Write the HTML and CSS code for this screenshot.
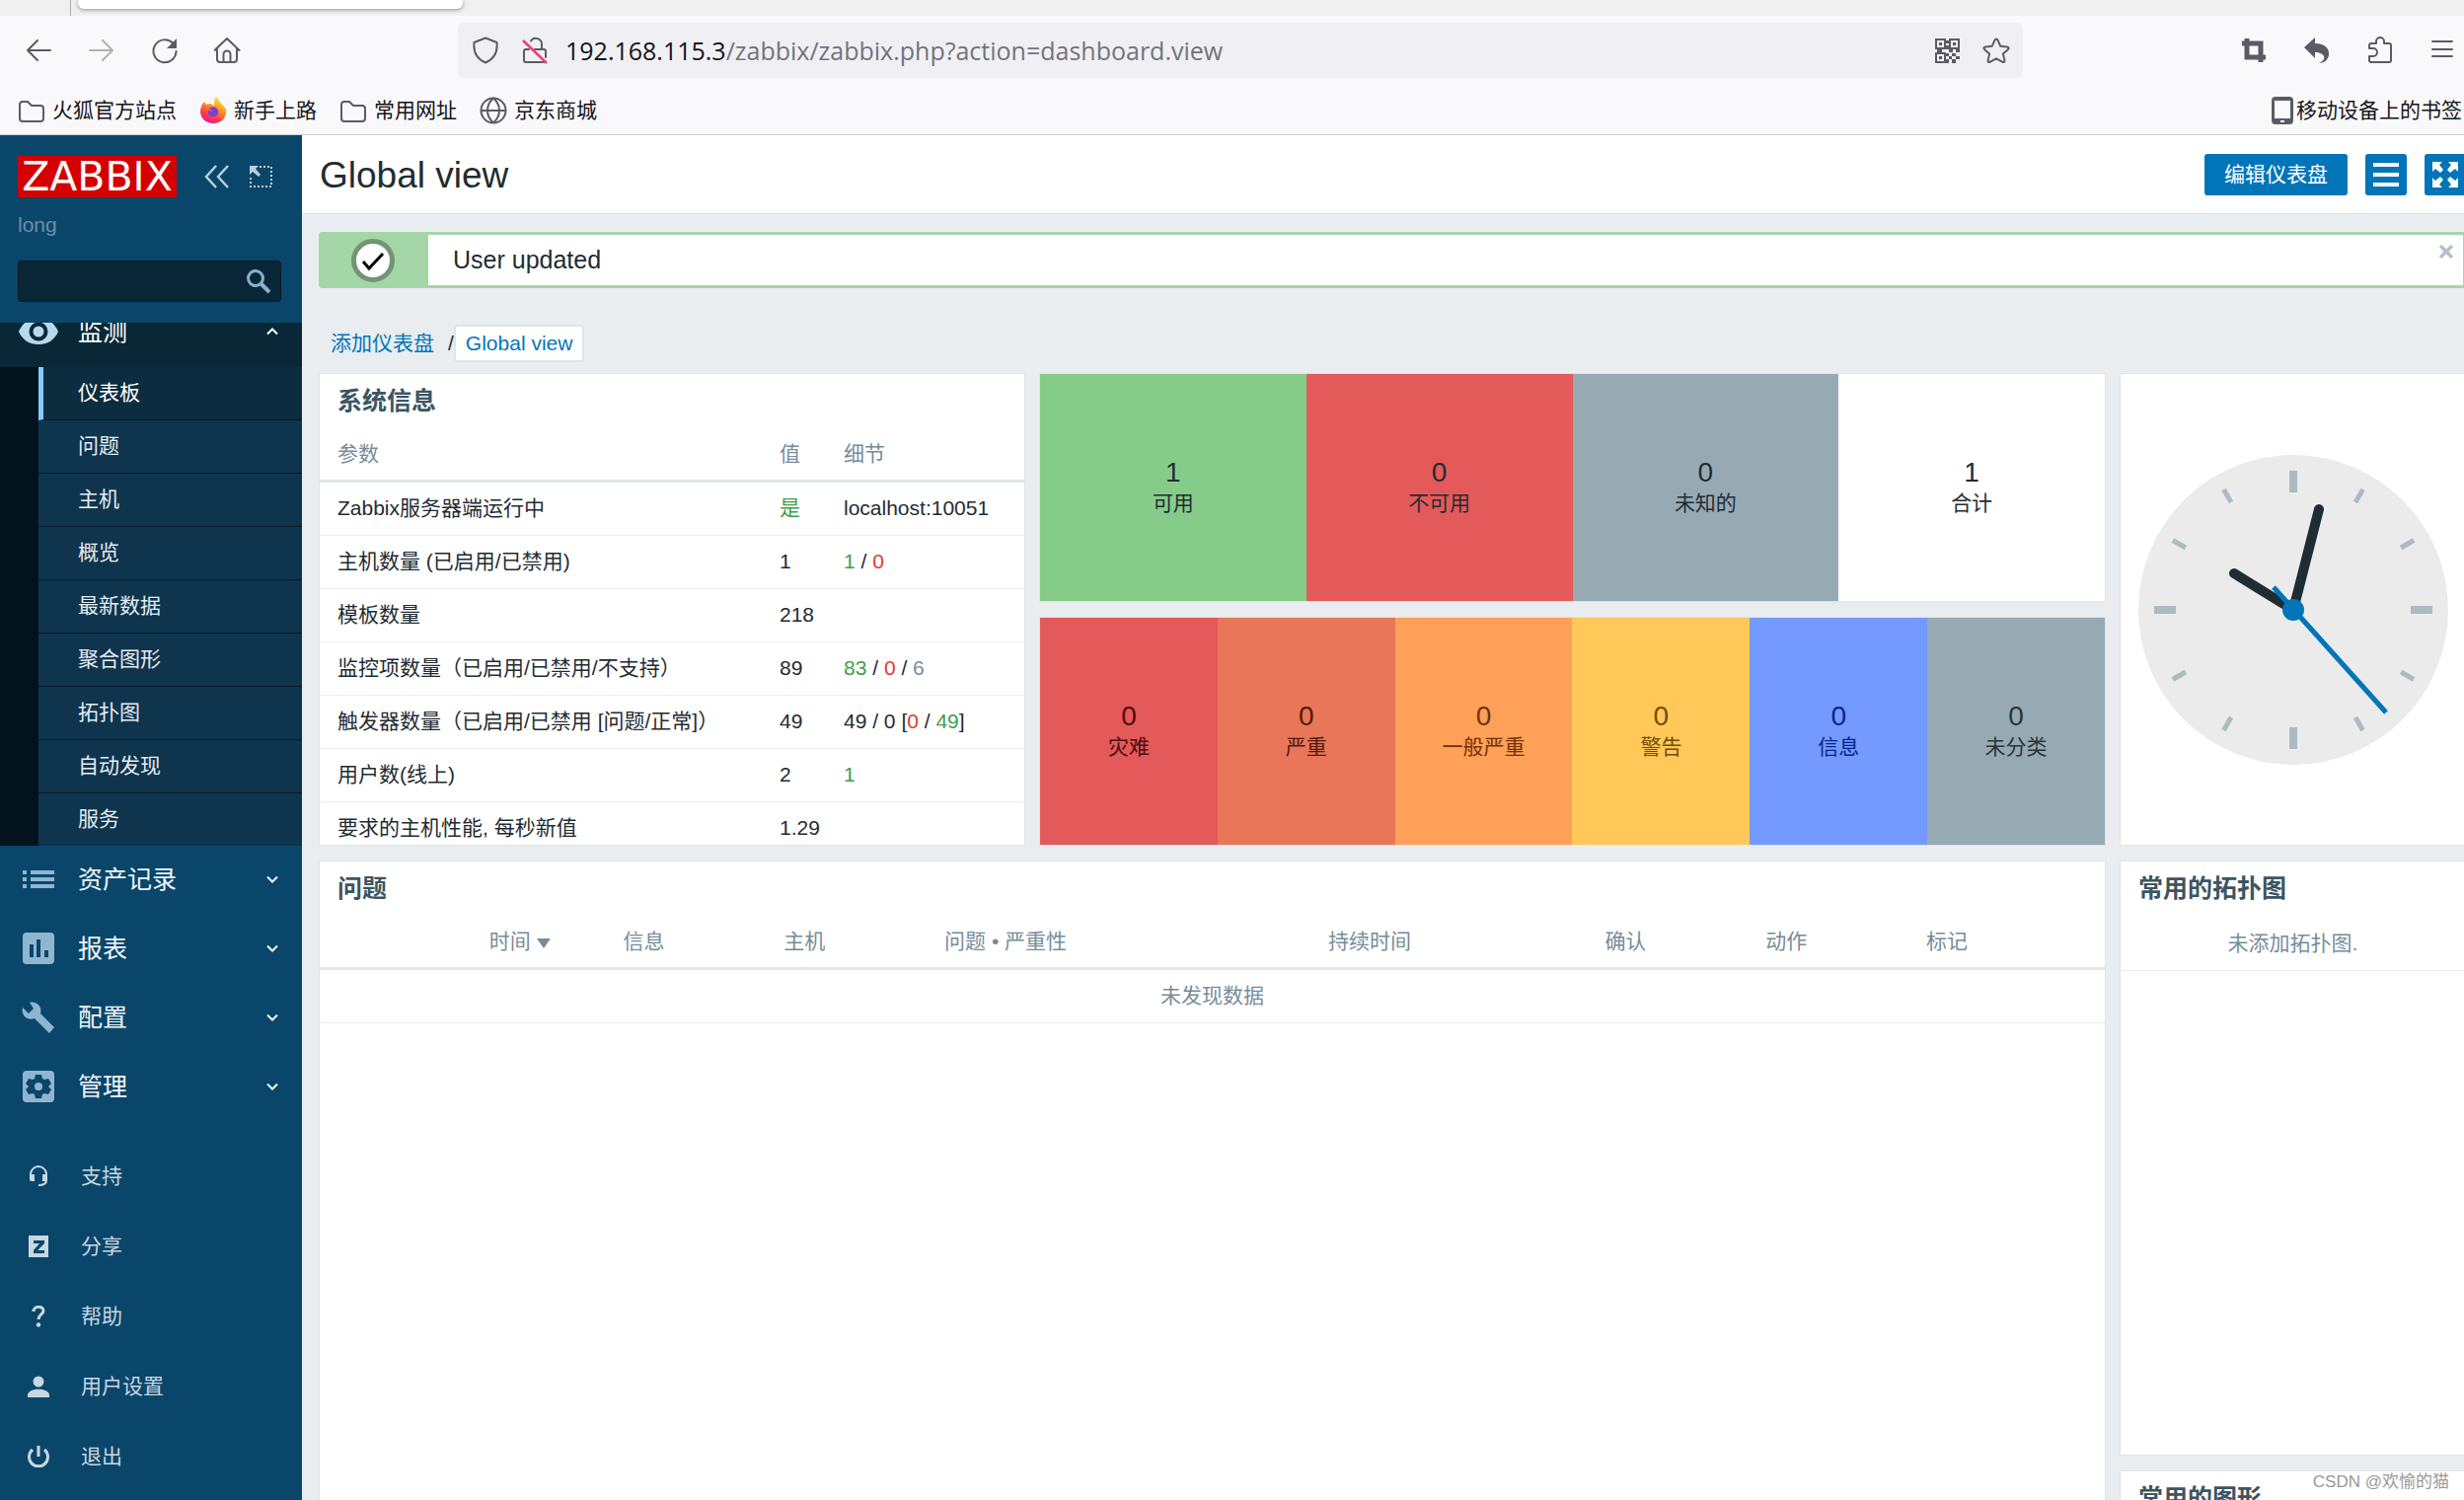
FILE: index.html
```html
<!DOCTYPE html>
<html lang="zh-CN">
<head>
<meta charset="utf-8">
<title>Global view</title>
<link rel="stylesheet" href="styles.css">
</head>
<body>
<svg class="defs" aria-hidden="true">
  <symbol id="i-folder" viewBox="0 0 28 28"><path d="M2 8a3 3 0 0 1 3-3h5l4 4h9a3 3 0 0 1 3 3v10a3 3 0 0 1-3 3H5a3 3 0 0 1-3-3z" fill="none" stroke="currentColor" stroke-width="2"/></symbol>
  <symbol id="i-down" viewBox="0 0 12 12"><path d="M1 3.500l5 5 5-5" fill="none" stroke="currentColor" stroke-width="2"/></symbol>
</svg>

<div class="browser">
  <div class="tabstrip"><div class="tabs"><div class="tab"></div></div></div>
  <div class="toolbar">
    <div class="tools">
      <button class="tool" aria-label="后退"><svg viewBox="0 0 28 28"><path d="M26 14H3M13 4L3 14l10 10" class="line"/></svg></button>
      <button class="tool faded" aria-label="前进"><svg viewBox="0 0 28 28"><path d="M2 14h23M15 4l10 10-10 10" class="line"/></svg></button>
      <button class="tool" aria-label="刷新"><svg viewBox="0 0 28 28"><path d="M25.500 15A11.500 11.500 0 1 1 22 6.500" class="line"/><path d="M26 2v10H16z" fill="currentColor"/></svg></button>
      <button class="tool" aria-label="主页"><svg viewBox="0 0 28 28"><path d="M.5 14L13 2l12.500 12M3 12v11a3 3 0 0 0 3 3h14a3 3 0 0 0 3-3V12M9.500 26v-8a3.500 3.500 0 0 1 7 0v8" class="line"/></svg></button>
    </div>
    <div class="urlbar">
      <svg viewBox="0 0 28 28"><path d="M14 1.500L25.500 6c1 10-3 17-11.500 20.500C5.500 23 1.500 16 2.500 6z" class="line"/></svg>
      <svg viewBox="0 0 28 28"><path d="M21 13V8a6 6 0 0 0-11-3.500M8 13H5a2 2 0 0 0-2 2v9a2 2 0 0 0 2 2h18M14 13h9a2 2 0 0 1 2 2v6" class="line"/><path d="M2 4l24 23" stroke="#f03e68" stroke-width="2.500"/></svg>
      <div class="url"><b>192.168.115.3</b>/zabbix/zabbix.php?action=dashboard.view</div>
      <svg viewBox="0 0 28 28"><path d="M3 3h9v9H3zM17 3h9v9h-9zM3 17h9v9H3z" fill="none" stroke="currentColor" stroke-width="2"/><path d="M6 6h3v3H6zM20 6h3v3h-3zM6 20h3v3H6zM13 4h3v3h-3zM13 9h3v4h4v3h-4v-3h-3zM4 13h5v3H4zM23 13h4v3h-4zM13 17h3v3h-3zM19 17h4v3h-4zM16 20h3v3h-3zM23 20h4v3h-4zM13 23h3v4h-3zM19 23h4v4h-4z" fill="currentColor"/></svg>
      <svg viewBox="0 0 28 28"><path d="M14 2.500c.8 0 1.200.5 1.500 1.200l2.700 6 6.600.7c1.800.2 2.300 1.600 1 2.800l-4.900 4.400 1.500 6.500c.3 1.600-.9 2.500-2.300 1.600L14 22.300l-6.100 3.400c-1.400.9-2.600 0-2.300-1.600l1.500-6.500-4.900-4.400c-1.300-1.200-.8-2.600 1-2.800l6.600-.7 2.700-6c.3-.7.7-1.200 1.500-1.200z" class="line"/></svg>
    </div>
    <div class="tools">
      <button class="tool" aria-label="截图"><svg viewBox="0 0 28 28"><path d="M7 2v19h19M2 7h19v19" fill="none" stroke="currentColor" stroke-width="5"/></svg></button>
      <button class="tool" aria-label="撤销"><svg viewBox="0 0 28 28"><path d="M1 11L12 1v6c10 0 15 5 14 12-1 5-5 8-10 8 4-2 6-4 5-7-1-2-4-4-9-4v6z" fill="currentColor"/></svg></button>
      <button class="tool" aria-label="扩展"><svg viewBox="0 0 28 28"><path d="M3 12V9a2 2 0 0 1 2-2h5V5a4 4 0 0 1 8 0v2h5a2 2 0 0 1 2 2v15a2 2 0 0 1-2 2H5a2 2 0 0 1-2-2v-4h4a4 4 0 0 0 0-8z" class="line"/></svg></button>
      <button class="tool" aria-label="菜单"><svg viewBox="0 0 28 28"><path d="M3 5h20M3 13h20M3 20h20" class="line"/></svg></button>
    </div>
  </div>
  <div class="bookmarks">
    <a href="#"><svg><use href="#i-folder"/></svg>火狐官方站点</a>
    <a href="#"><svg viewBox="0 0 28 28">
      <defs><linearGradient id="fox" x1=".8" y1="0" x2=".3" y2="1"><stop offset="0" stop-color="#fff14a"/><stop offset=".4" stop-color="#ff9a1f"/><stop offset=".75" stop-color="#ff3a4d"/><stop offset="1" stop-color="#e3189a"/></linearGradient></defs>
      <path d="M17 0c3 3 4 5 5 7 4 3 6 6 5 10-1 6-6 10-13 10S1 22 1 15c0-4 2-8 4-10l2 3 3-1c2 0 4 1 5 3 0-4 0-7 2-10z" fill="url(#fox)"/><path d="M10 12c3-3 8-2 9 2s-2 7-6 6-5-4-4-6l5 1z" fill="#7542d8"/></svg>新手上路</a>
    <a href="#"><svg><use href="#i-folder"/></svg>常用网址</a>
    <a href="#"><svg viewBox="0 0 28 28"><path d="M14 1.500a12.500 12.500 0 1 1 0 25 12.500 12.500 0 0 1 0-25zM14 1.500c-8 7-8 18 0 25M14 1.500c8 7 8 18 0 25M2 14h24" class="line"/></svg>京东商城</a>
    <a href="#" class="mobile"><svg viewBox="0 0 22 28"><path d="M4 0h14a4 4 0 0 1 4 4v20a4 4 0 0 1-4 4H4a4 4 0 0 1-4-4V4a4 4 0 0 1 4-4zm-1 4v18h16V4zm6 20v2h4v-2z" fill="currentColor" fill-rule="evenodd"/></svg>移动设备上的书签</a>
  </div>
</div>

<div class="app">
  <aside class="sidebar">
    <div class="brand">
      <a href="#" class="logo">ZABBIX</a>
      <button class="mini" aria-label="收起"><svg viewBox="0 0 26 24"><path d="M12 1L2 12l10 11M24 1L14 12l10 11" fill="none" stroke="currentColor" stroke-width="2.500"/></svg></button>
      <button class="mini" aria-label="隐藏"><svg viewBox="0 0 26 24"><path d="M12 2h12v20H3V11" fill="none" stroke="currentColor" stroke-width="2" stroke-dasharray="2 2"/><path d="M2 1h9L8 4l5 6-2 2-6-5-3 3z" fill="currentColor"/></svg></button>
    </div>
    <div class="server">long</div>
    <form class="search"><input type="text" aria-label="搜索"><button type="button" aria-label="搜索"><svg viewBox="0 0 26 26"><circle cx="10" cy="10" r="7.500" fill="none" stroke="currentColor" stroke-width="3"/><path d="M15 15l9 9" stroke="currentColor" stroke-width="4"/></svg></button></form>
    <nav class="menu">
      <a href="#" class="item open"><svg class="ico" viewBox="0 0 40 32"><path d="M0 16C4 7 11 2 20 2s16 5 20 14c-4 9-11 13-20 13S4 25 0 16z" fill="currentColor"/><circle cx="20" cy="16" r="7.500" fill="none" stroke="#0a2738" stroke-width="4"/></svg><span>监测</span><svg class="chev up"><use href="#i-down"/></svg></a>
      <div class="sub">
        <a href="#" class="current">仪表板</a><a href="#">问题</a><a href="#">主机</a><a href="#">概览</a><a href="#">最新数据</a><a href="#">聚合图形</a><a href="#">拓扑图</a><a href="#">自动发现</a><a href="#">服务</a>
      </div>
      <a href="#" class="item"><svg class="ico" viewBox="0 0 40 32"><path d="M4 7h4v4H4zM12 7h24v4H12zM4 14h4v4H4zM12 14h24v4H12zM4 21h4v4H4zM12 21h24v4H12z" fill="currentColor"/></svg><span>资产记录</span><svg class="chev"><use href="#i-down"/></svg></a>
      <a href="#" class="item"><svg class="ico" viewBox="0 0 40 32"><path d="M8 0h24a4 4 0 0 1 4 4v24a4 4 0 0 1-4 4H8a4 4 0 0 1-4-4V4a4 4 0 0 1 4-4zm3 12v13h4V12zm7-5v18h4V7zm8 11v7h4v-7z" fill="currentColor" fill-rule="evenodd"/></svg><span>报表</span><svg class="chev"><use href="#i-down"/></svg></a>
      <a href="#" class="item"><svg class="ico" viewBox="0 0 40 32"><path d="M11 1c7-2 13 4 11 11l14 14-5 6-15-15C9 20 2 14 4 6l6 6 5-5z" fill="currentColor"/></svg><span>配置</span><svg class="chev"><use href="#i-down"/></svg></a>
      <a href="#" class="item"><svg class="ico" viewBox="0 0 40 32"><rect x="4" width="32" height="32" rx="4" fill="currentColor"/><path d="M17 4h6l1 4 2 1 4-1 3 5-3 3 3 3-3 5-4-1-2 1-1 4h-6l-1-4-2-1-4 1-3-5 3-3-3-3 3-5 4 1 2-1z" fill="#0a466a"/><circle cx="20" cy="16" r="4" fill="currentColor"/></svg><span>管理</span><svg class="chev"><use href="#i-down"/></svg></a>
    </nav>
    <nav class="usermenu">
      <a href="#"><svg viewBox="0 0 22 22"><path d="M3 12V9a8 8 0 0 1 16 0v6c0 4-3 5-8 5" fill="none" stroke="currentColor" stroke-width="2"/><path d="M2 9h5v7H4a2 2 0 0 1-2-2zM15 9h5v7h-5z" fill="currentColor"/></svg>支持</a>
      <a href="#"><svg viewBox="0 0 22 22"><path d="M1 0h20v22H1zM6 5v3h6l-6 7v3h11v-3h-7l7-7V5z" fill="currentColor" fill-rule="evenodd"/></svg>分享</a>
      <a href="#"><svg viewBox="0 0 22 22"><path d="M6 6c0-6 10-6 10-1 0 4-5 4-5 9" fill="none" stroke="currentColor" stroke-width="3"/><circle cx="11" cy="19.500" r="2.200" fill="currentColor"/></svg>帮助</a>
      <a href="#"><svg viewBox="0 0 22 22"><circle cx="11" cy="6" r="5.500" fill="currentColor"/><path d="M0 22v-3c2-7 20-7 22 0v3z" fill="currentColor"/></svg>用户设置</a>
      <a href="#"><svg viewBox="0 0 22 22"><path d="M5 4a9.500 9.500 0 1 0 12 0M11 0v11" fill="none" stroke="currentColor" stroke-width="3"/></svg>退出</a>
    </nav>
  </aside>

  <main class="main">
    <header class="pagehead">
      <h1>Global view</h1>
      <button class="btn">编辑仪表盘</button>
      <button class="btn square" aria-label="操作"><svg viewBox="0 0 26 26"><path d="M0 3h26M0 13h26M0 23h26" stroke="#fff" stroke-width="4"/></svg></button>
      <button class="btn square" aria-label="全屏"><svg viewBox="0 0 26 26"><path d="M0 0h10L7 3l4 5-3 3-5-4-3 3zM26 0v10l-3-3-5 4-3-3 4-5-3-3zM0 26V16l3 3 5-4 3 3-4 5 3 3zM26 26H16l3-3-4-5 3-3 5 4 3-3z" fill="#fff"/></svg></button>
    </header>
    <div class="content">
      <div class="msg">
        <div class="msgicon"><svg viewBox="0 0 44 44"><circle cx="22" cy="22" r="19.500" fill="#fff" stroke="#739475" stroke-width="5"/><path d="M12 23l6 7 14-15" fill="none" stroke="#000" stroke-width="3"/></svg></div>
        <div class="msgtext">User updated</div>
        <button class="close" aria-label="关闭"><svg viewBox="0 0 14 14"><path d="M1 1l12 12M13 1L1 13" stroke="currentColor" stroke-width="3.500"/></svg></button>
      </div>
      <div class="crumbs"><a href="#">添加仪表盘</a><span>/</span><a href="#" class="here">Global view</a></div>

      <div class="dash">
        <section class="card sys">
          <h2>系统信息</h2>
          <table>
            <thead><tr><th>参数</th><th class="val">值</th><th class="det">细节</th></tr></thead>
            <tbody>
              <tr><td>Zabbix服务器端运行中</td><td class="g">是</td><td>localhost:10051</td></tr>
              <tr><td>主机数量 (已启用/已禁用)</td><td>1</td><td><span class="g">1</span> / <span class="r">0</span></td></tr>
              <tr><td>模板数量</td><td>218</td><td></td></tr>
              <tr><td>监控项数量（已启用/已禁用/不支持）</td><td>89</td><td><span class="g">83</span> / <span class="r">0</span> / <span class="m">6</span></td></tr>
              <tr><td>触发器数量（已启用/已禁用 [问题/正常]）</td><td>49</td><td>49 / 0 [<span class="r">0</span> / <span class="g">49</span>]</td></tr>
              <tr><td>用户数(线上)</td><td>2</td><td class="g">1</td></tr>
              <tr><td>要求的主机性能, 每秒新值</td><td>1.29</td><td></td></tr>
            </tbody>
          </table>
        </section>
        <section class="card tiles avail">
          <div class="tile ok"><b>1</b>可用</div>
          <div class="tile bad"><b>0</b>不可用</div>
          <div class="tile unk"><b>0</b>未知的</div>
          <div class="tile"><b>1</b>合计</div>
        </section>
        <section class="card tiles sev">
          <div class="tile disaster"><b>0</b>灾难</div>
          <div class="tile high"><b>0</b>严重</div>
          <div class="tile average"><b>0</b>一般严重</div>
          <div class="tile warning"><b>0</b>警告</div>
          <div class="tile info"><b>0</b>信息</div>
          <div class="tile none"><b>0</b>未分类</div>
        </section>
        <section class="card clock">
          <svg viewBox="-157 -157 314 314">
            <circle r="157" fill="#ebebeb"/>
            <path d="M0-141v22M0 119v22M-141 0h22M119 0h22" stroke="#acbbc2" stroke-width="8"/>
            <g stroke="#acbbc2" stroke-width="5">
              <path d="M0-141v15" transform="rotate(30)"/><path d="M0-141v15" transform="rotate(60)"/><path d="M0-141v15" transform="rotate(120)"/><path d="M0-141v15" transform="rotate(150)"/><path d="M0-141v15" transform="rotate(210)"/><path d="M0-141v15" transform="rotate(240)"/><path d="M0-141v15" transform="rotate(300)"/><path d="M0-141v15" transform="rotate(330)"/>
            </g>
            <path d="M0 0L-60-37M0 0L26-102" stroke="#1f2c33" stroke-width="10" stroke-linecap="round"/>
            <path d="M-20-23L94 104" stroke="#0275b8" stroke-width="5"/>
            <circle r="11" fill="#0275b8"/>
          </svg>
        </section>
        <section class="card problems">
          <h2>问题</h2>
          <table>
            <thead><tr><th class="c0"></th><th class="c1">时间 <i class="sort"></i></th><th class="c2">信息</th><th class="c2">主机</th><th class="c4">问题 • 严重性</th><th class="c5">持续时间</th><th class="c2">确认</th><th class="c2">动作</th><th>标记</th></tr></thead>
            <tbody><tr><td colspan="9" class="empty">未发现数据</td></tr></tbody>
          </table>
        </section>
        <section class="card maps"><h2>常用的拓扑图</h2><p class="nodata">未添加拓扑图.</p></section>
        <section class="card graphs"><h2>常用的图形</h2></section>
      </div>
    </div>
  </main>
</div>
<div class="watermark">CSDN @欢愉的猫</div>
</body>
</html>
```
FILE: styles.css
```css
* { box-sizing: border-box; }
body {
  margin: 0;
  height: 100vh;
  overflow: hidden;
  display: flex;
  flex-direction: column;
  font: 21px/30px "Liberation Sans", "Noto Sans CJK SC", sans-serif;
  color: #1f2c33;
  background: #e9edf0;
}
a { text-decoration: none; color: inherit; }
button { font: inherit; border: 0; padding: 0; background: none; color: inherit; display: flex; align-items: center; justify-content: center; }
svg { display: block; flex: none; }
.defs { position: absolute; width: 0; height: 0; }
.line { fill: none; stroke: currentColor; stroke-width: 2; stroke-linejoin: round; stroke-linecap: round; }

/* browser chrome */
.browser { flex: none; background: #f9f9fb; border-bottom: 1px solid #ccc; color: #5b5b66; }
.tabstrip { height: 16px; background: #f0f0f0; padding-left: 71px; overflow: hidden; }
.tabs { height: 16px; padding-left: 7px; border-left: 1px solid #aaa; }
.tab { height: 9px; width: 390px; background: #fff; border-radius: 0 0 6px 6px; box-shadow: 0 1px 4px rgba(0, 0, 0, .4); }
.toolbar { display: flex; align-items: center; padding: 7px 7px 8px 25px; }
.tools { display: flex; gap: 36px; }
.tool svg, .urlbar svg, .bookmarks svg { width: 28px; height: 28px; }
.faded { opacity: .45; }
.urlbar { flex: 1; margin: 0 220px 0 219px; height: 56px; border-radius: 6px; background: #f0f0f4; display: flex; align-items: center; padding: 0 13px 0 14px; }
.urlbar svg + svg { margin-left: 22px; }
.url { flex: 1; margin-left: 17px; font: 25px/34px "Open Sans", sans-serif; color: #73737b; }
.url b { font-weight: 400; color: #15141a; }
.bookmarks { display: flex; align-items: center; height: 49px; padding-left: 18px; gap: 23px; }
.bookmarks a { display: flex; align-items: center; gap: 7px; color: #15141a; white-space: nowrap; }
.bookmarks svg { color: #5b5b66; }
.bookmarks .mobile { margin-left: auto; margin-right: 2px; gap: 3px; }
.bookmarks .mobile svg { width: 22px; }

.app { flex: 1; min-height: 0; display: grid; grid-template-columns: 306px 1fr; margin-right: -2px; }

/* sidebar */
.sidebar { background: #0a466a; padding-top: 21px; overflow: hidden; }
.brand { display: flex; align-items: center; padding-left: 18px; }
.logo { width: 161px; height: 42px; background: #d40000; color: #fff; font: 41px/42px "DejaVu Sans", sans-serif; text-align: center; margin-right: 28px; }
.mini { color: #b8cfdf; margin-right: 18px; }
.mini svg { width: 26px; height: 24px; }
.server { padding-left: 18px; line-height: 56px; height: 64px; color: #6b8fa8; }
.search { display: flex; margin: 0 21px 21px 18px; height: 42px; border: 1px solid #061822; border-radius: 4px; background: #0a2738; }
.search input { flex: 1; min-width: 0; border: 0; background: none; font: inherit; color: #fff; padding: 0 10px; outline: 0; }
.search button { width: 44px; color: #8ab0cc; }
.search svg { width: 26px; height: 26px; }
.menu { overflow: hidden; }
.item { display: flex; align-items: center; height: 70px; padding: 0 24px 2px 19px; font-size: 25px; color: #f0f6fa; }
.item span { flex: 1; margin-left: 20px; }
.ico { width: 40px; height: 32px; color: #8fb5cf; }
.chev { width: 12px; height: 12px; }
.up { transform: rotate(180deg); }
.open { margin-top: -25px; background: #0a2738; color: #fff; }
.open .ico { color: #b8d8ec; }
.sub { border-left: 39px solid #03131d; background: #0f344d; }
.sub a { display: block; height: 54px; line-height: 51px; padding-left: 40px; border-bottom: 1px solid #061c2a; color: #e4ecf2; }
.sub a:last-child { height: 53px; border-bottom: 0; }
.sub .current { background: #0c2c40; border-left: 5px solid #83cbff; padding-left: 35px; color: #fff; }
.usermenu { margin-top: 20px; }
.usermenu a { display: flex; align-items: center; height: 71px; padding: 0 0 2px 28px; gap: 32px; color: #c8d7e1; }
.usermenu svg { width: 22px; height: 22px; }

/* page */
.main { min-width: 0; overflow: hidden; }
.pagehead { display: flex; align-items: center; gap: 18px; height: 80px; padding-left: 18px; background: #fff; border-bottom: 1px solid #dfe4e7; }
.pagehead h1 { flex: 1; margin: 0; padding-top: 2px; font-size: 37px; line-height: 40px; font-weight: 400; }
.btn { height: 42px; padding: 0 20px; border-radius: 3px; background: #0275b8; color: #fff; }
.square { width: 42px; padding: 0; }
.square svg { width: 26px; height: 26px; }
.content { padding: 18px 0 0 17px; }
.msg { display: flex; height: 57px; border: 3px solid #a5d6a8; border-radius: 4px; background: #fff; }
.msgicon { width: 108px; padding-right: 4px; background: #a5d6a8; display: flex; align-items: center; justify-content: center; }
.msgicon svg { width: 44px; height: 44px; }
.msgtext { flex: 1; padding-left: 25px; font-size: 25px; line-height: 51px; }
.close { align-self: flex-start; margin: 10px; color: #b5c2c9; }
.close svg { width: 14px; height: 14px; }
.crumbs { display: flex; align-items: center; margin: 37px 0 11px; padding-left: 12px; }
.crumbs a { color: #0275b8; }
.crumbs span { margin-left: 14px; }
.crumbs .here { padding: 0 10px; height: 38px; line-height: 34px; border: 2px solid #dfe4e7; border-radius: 4px; background: #fff; }

.dash { display: grid; grid-template-columns: repeat(12, minmax(0, 1fr)); grid-template-rows: 232px 232px 603px 200px; gap: 15px 14px; }
.card { background: #fff; border: 1px solid #dfe4e7; overflow: hidden; }
.card h2 { margin: 0; padding: 0 18px; font-size: 25px; line-height: 55px; color: #3c5563; }
.sys { grid-area: 1 / 1 / 3 / 5; }
.avail { grid-area: 1 / 5 / 2 / 11; }
.sev { grid-area: 2 / 5 / 3 / 11; }
.clock { grid-area: 1 / 11 / 3 / 13; display: flex; align-items: center; justify-content: center; }
.clock svg { width: 314px; height: 314px; }
.problems { grid-area: 3 / 1 / 5 / 11; }
.maps { grid-area: 3 / 11 / 4 / 13; }
.graphs { grid-area: 4 / 11 / 5 / 13; }

table { width: 100%; border-collapse: separate; border-spacing: 0; table-layout: fixed; }
th { height: 55px; padding: 0 9px; text-align: left; font-weight: 400; color: #768d99; border-bottom: 3px solid #dfe4e7; }
td { height: 54px; padding: 0 9px 1px; border-bottom: 1px solid #ebeef0; white-space: nowrap; }
th:first-child, td:first-child { padding-left: 18px; }
.val { width: 65px; }
.det { width: 192px; }
.g { color: #429e47; }
.r { color: #e33734; }
.m { color: #768d99; }
.c0 { width: 9%; }
.c1 { width: 7.5%; }
.c2 { width: 9%; }
.c4 { width: 21.5%; }
.c5 { width: 15.500%; }
.sort { display: inline-block; border: 7px solid transparent; border-top: 10px solid #768d99; border-bottom: 0; }
td.empty { padding-left: 9px; text-align: center; color: #768d99; }
.nodata { margin: 0; height: 56px; line-height: 55px; text-align: center; color: #768d99; border-bottom: 1px solid #ebeef0; }

.tiles { display: flex; }
.tile { flex: 1; display: flex; flex-direction: column; justify-content: center; padding-top: 2px; text-align: center; line-height: 32px; }
.tile b { font-weight: 400; font-size: 28px; line-height: 30px; }
.ok { background: #86cc89; }
.bad { background: #e45959; }
.unk { background: #97aab3; }
.disaster { background: #e45959; color: #4b0c0c; }
.high { background: #e97659; color: #52190b; }
.average { background: #ffa059; color: #733100; }
.warning { background: #ffc859; color: #734d00; }
.info { background: #7499ff; color: #00268e; }
.none { background: #97aab3; color: #2a353a; }

.watermark { position: absolute; right: 15px; bottom: 5px; font-size: 17px; line-height: 26px; color: #999; }
```
